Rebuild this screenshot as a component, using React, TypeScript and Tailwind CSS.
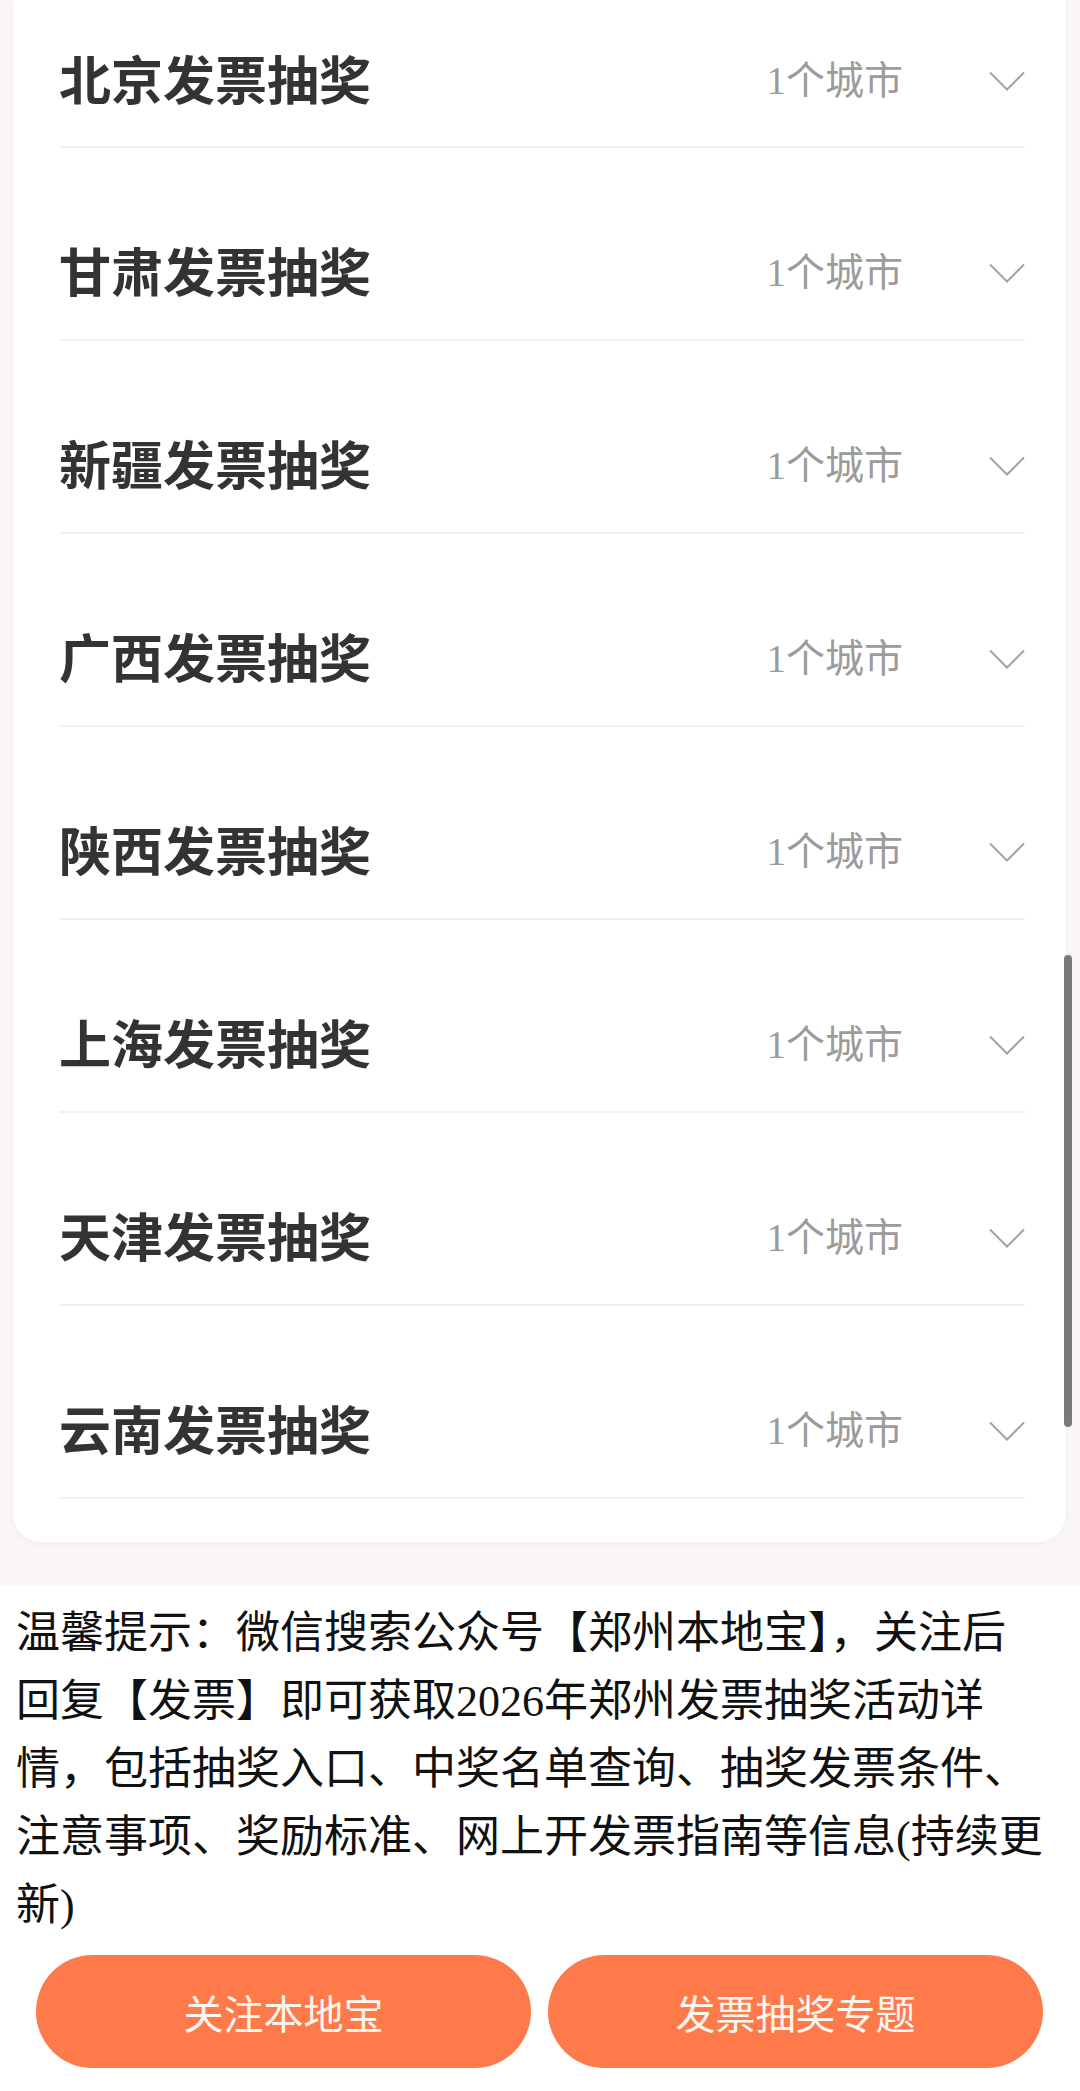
import React from "react";

const provinces = ["北京", "甘肃", "新疆", "广西", "陕西", "上海", "天津", "云南"];

function Chevron() {
  return (
    <svg width="36" height="20" viewBox="0 0 36 20" fill="none" className="block">
      <polyline points="1,1.5 18,18.5 35,1.5" stroke="#a3a3a3" strokeWidth="2" fill="none" />
    </svg>
  );
}

export default function App() {
  return (
    <div className="relative w-[1080px] h-[2091px] overflow-hidden bg-white">
      <div className="bg-[#fbf6f6] pl-[13px] pr-[14px] pb-[44px]">
        <div className="bg-white rounded-b-[28px] shadow-[0_2px_6px_rgba(0,0,0,0.04)] pl-[46px] pr-[41px] pb-[43px]">
          {provinces.map((p, i) => (
            <div
              key={p}
              className={
                i === 0
                  ? "flex items-center justify-between border-b-2 border-[#f1f1f1] pt-[48px] pb-[38px]"
                  : "flex items-center justify-between border-b-2 border-[#f1f1f1] pt-[92px] pb-[39px]"
              }
            >
              <div className="h-[60px] leading-[60px] text-[52px] font-bold text-[#333333] font-['Noto_Sans_CJK_SC',sans-serif] whitespace-nowrap">
                {p}发票抽奖
              </div>
              <div className="flex h-[60px] items-center gap-[86px] translate-y-[3px]">
                <span className="text-[39px] leading-[60px] text-[#9b9b9b] font-['Liberation_Serif','Noto_Sans_CJK_SC',serif] whitespace-nowrap">
                  1个城市
                </span>
                <Chevron />
              </div>
            </div>
          ))}
        </div>
      </div>

      <div className="px-[16px] pt-[14px] text-[44px] leading-[68px] text-[#111111] font-['Liberation_Serif','Noto_Sans_CJK_SC',serif]">
        <div className="whitespace-nowrap">温馨提示：微信搜索公众号【郑州本地宝】，关注后</div>
        <div className="whitespace-nowrap">回复【发票】即可获取2026年郑州发票抽奖活动详</div>
        <div className="whitespace-nowrap">情，包括抽奖入口、中奖名单查询、抽奖发票条件、</div>
        <div className="whitespace-nowrap">注意事项、奖励标准、网上开发票指南等信息(持续更</div>
        <div className="whitespace-nowrap">新)</div>
      </div>

      <div className="flex gap-[17px] pl-[36px] pr-[37px] mt-[15px]">
        <button className="flex-1 h-[113px] rounded-full bg-[#ff7a4b] text-[#fff6ee] text-[40px] font-['Noto_Sans_CJK_SC',sans-serif]">
          关注本地宝
        </button>
        <button className="flex-1 h-[113px] rounded-full bg-[#ff7a4b] text-[#fff6ee] text-[40px] font-['Noto_Sans_CJK_SC',sans-serif]">
          发票抽奖专题
        </button>
      </div>

      <div className="absolute left-[1064px] top-[955px] w-[8px] h-[472px] rounded-full bg-[#7a7a7a]" />
    </div>
  );
}
